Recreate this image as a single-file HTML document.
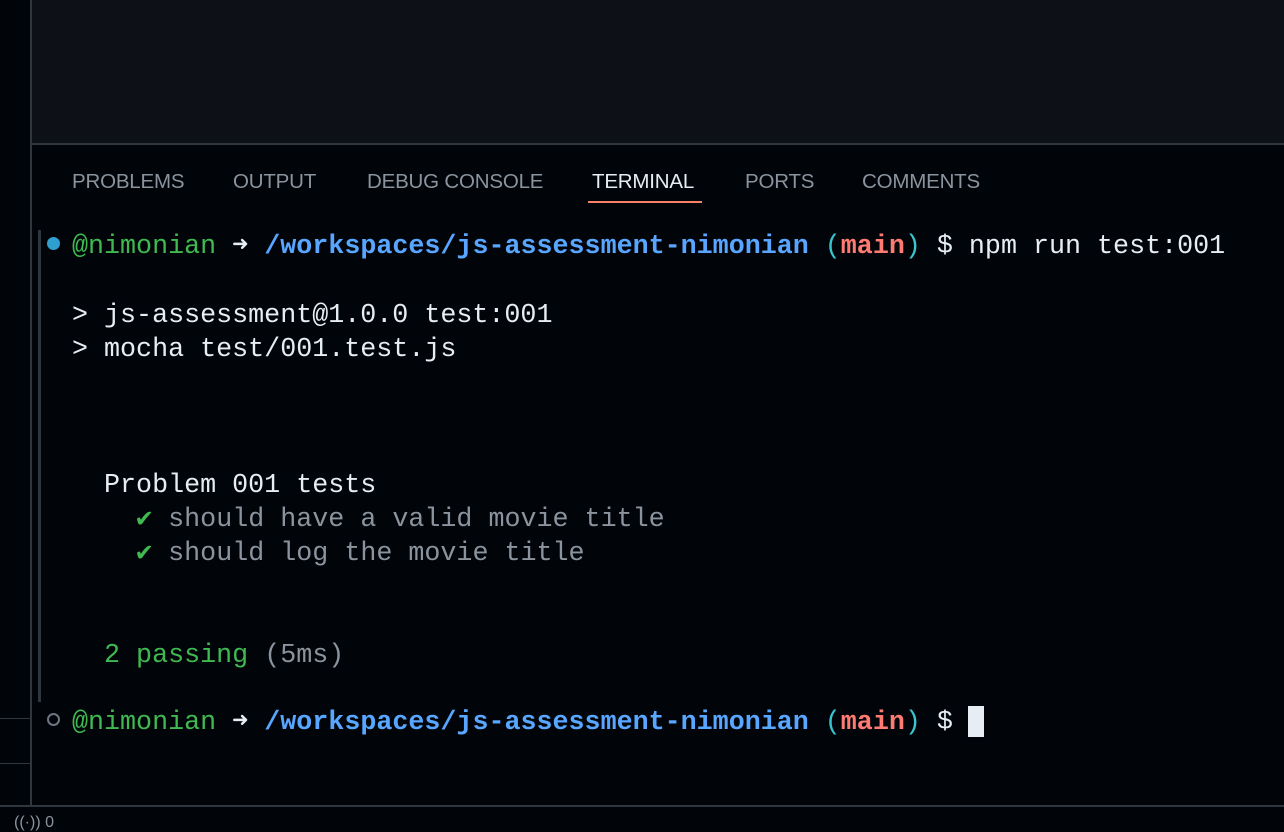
<!DOCTYPE html>
<html><head><style>
body{margin:0;width:1284px;height:828px;background:#010409;position:relative;overflow:hidden;font-family:"Liberation Sans",sans-serif}
.abs{position:absolute}
.tab{position:absolute;top:170px;font-size:20.5px;color:#8b949e;letter-spacing:-0.2px}
.t{position:absolute;left:72px;font-family:"Liberation Mono","DejaVu Sans Mono",monospace;font-size:26.7px;line-height:34px;white-space:pre;color:#e6edf3}
.g{color:#3fb950}.b{color:#58a6ff;font-weight:bold}.c{color:#39c5cf}.r{color:#ff7b72;font-weight:bold}.d{color:#8b949e}
</style></head><body>
<div class="abs" style="left:31px;top:0;width:1253px;height:144px;background:#0d1117"></div>
<div class="abs" style="left:30px;top:0;width:2px;height:806px;background:#30363d"></div>
<div class="abs" style="left:31px;top:143px;width:1253px;height:2px;background:#30363d"></div>
<div class="abs" style="left:0;top:718px;width:30px;height:1px;background:#30363d"></div>
<div class="abs" style="left:0;top:763px;width:30px;height:1px;background:#30363d"></div>
<div class="abs" style="left:0;top:805px;width:1284px;height:2px;background:#30363d"></div>
<div class="abs" style="left:14px;top:814px;font-size:16px;color:#8b949e">((·)) 0</div>
<div class="tab" style="left:72px">PROBLEMS</div>
<div class="tab" style="left:233px">OUTPUT</div>
<div class="tab" style="left:367px">DEBUG CONSOLE</div>
<div class="tab" style="left:592px;color:#e6edf3">TERMINAL</div>
<div class="tab" style="left:745px">PORTS</div>
<div class="tab" style="left:862px">COMMENTS</div>
<div class="abs" style="left:588px;top:201px;width:114px;height:2px;background:#f78166"></div>
<div class="abs" style="left:38px;top:230px;width:3px;height:472px;background:#30363d"></div>
<div class="abs" style="left:47px;top:237px;width:13px;height:13px;border-radius:50%;background:#2f9fd0"></div>
<div class="abs" style="left:47px;top:713px;width:9px;height:9px;border-radius:50%;border:2px solid #6e7681"></div>
<div class="t" style="top:230px"><span class="g">@nimonian</span> ➜ <span class="b">/workspaces/js-assessment-nimonian</span> <span class="c">(</span><span class="r">main</span><span class="c">)</span> $ npm run test:001</div>
<div class="t" style="top:299px">&gt; js-assessment@1.0.0 test:001
&gt; mocha test/001.test.js</div>
<div class="t" style="top:469px">  Problem 001 tests
    <span class="g">✔</span> <span class="d">should have a valid movie title</span>
    <span class="g">✔</span> <span class="d">should log the movie title</span></div>
<div class="t" style="top:639px">  <span class="g">2 passing</span> <span class="d">(5ms)</span></div>
<div class="t" style="top:706px"><span class="g">@nimonian</span> ➜ <span class="b">/workspaces/js-assessment-nimonian</span> <span class="c">(</span><span class="r">main</span><span class="c">)</span> $ </div>
<div class="abs" style="left:968px;top:706px;width:16px;height:31px;background:#e6edf3"></div>
</body></html>
